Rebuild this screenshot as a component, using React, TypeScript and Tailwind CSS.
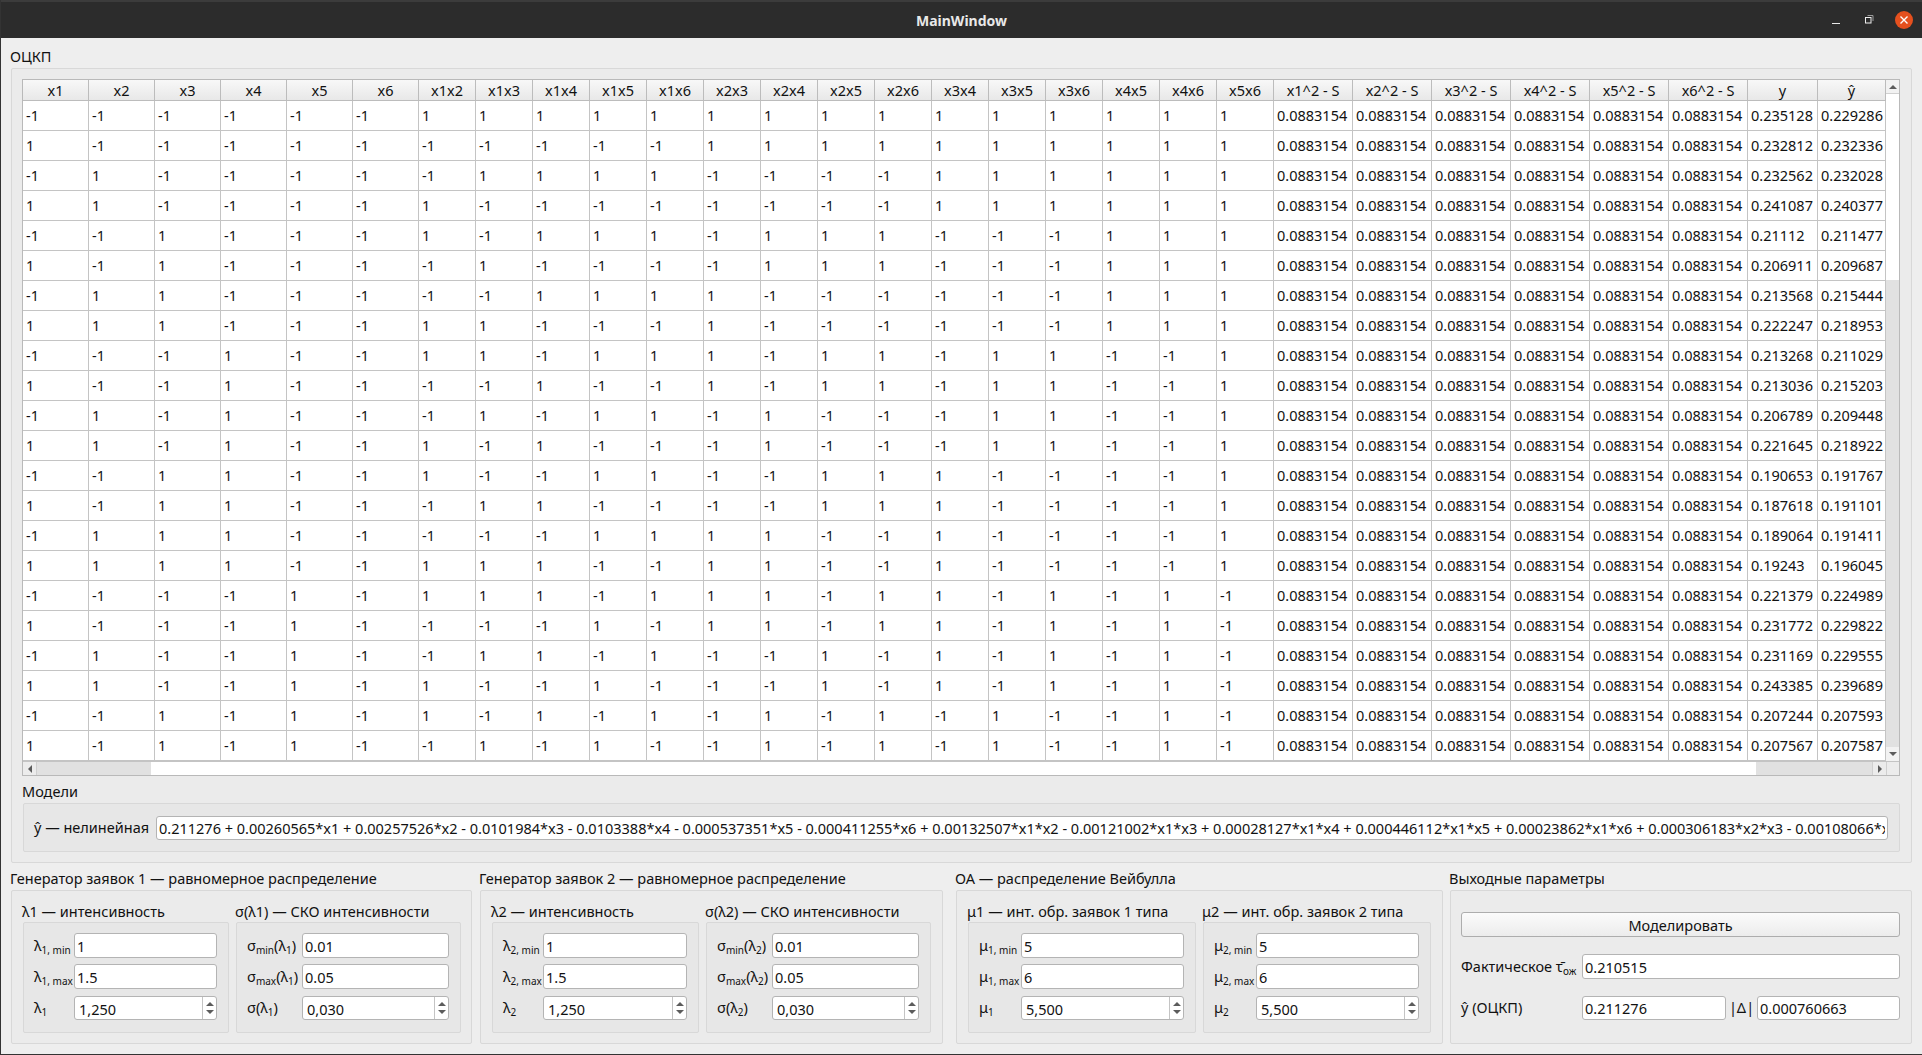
import type { ReactNode } from 'react';

const COLUMNS = [
  'x1', 'x2', 'x3', 'x4', 'x5', 'x6',
  'x1x2', 'x1x3', 'x1x4', 'x1x5', 'x1x6', 'x2x3', 'x2x4', 'x2x5', 'x2x6', 'x3x4', 'x3x5', 'x3x6', 'x4x5', 'x4x6', 'x5x6',
  'x1^2 - S', 'x2^2 - S', 'x3^2 - S', 'x4^2 - S', 'x5^2 - S', 'x6^2 - S', 'y', 'ŷ',
];

const COL_WIDTHS = [
  ...Array(6).fill(66),
  ...Array(15).fill(57),
  ...Array(6).fill(79),
  70,
  68,
];

const Y = [
  '0.235128', '0.232812', '0.232562', '0.241087', '0.21112', '0.206911', '0.213568', '0.222247', '0.213268', '0.213036', '0.206789',
  '0.221645', '0.190653', '0.187618', '0.189064', '0.19243', '0.221379', '0.231772', '0.231169', '0.243385', '0.207244', '0.207567',
];

const Y_HAT = [
  '0.229286', '0.232336', '0.232028', '0.240377', '0.211477', '0.209687', '0.215444', '0.218953', '0.211029', '0.215203', '0.209448',
  '0.218922', '0.191767', '0.191101', '0.191411', '0.196045', '0.224989', '0.229822', '0.229555', '0.239689', '0.207593', '0.207587',
];

const FORMULA =
  '0.211276 + 0.00260565*x1 + 0.00257526*x2 - 0.0101984*x3 - 0.0103388*x4 - 0.000537351*x5 - 0.000411255*x6 + 0.00132507*x1*x2 - 0.00121002*x1*x3 + 0.00028127*x1*x4 + 0.000446112*x1*x5 + 0.00023862*x1*x6 + 0.000306183*x2*x3 - 0.00108066*x2*x4';

// half of the factorial plan: factors come from the row index, interactions are products
function buildRow(i: number): string[] {
  const f = [0, 1, 2, 3, 4, 5].map((b) => ((i >> b) & 1 ? 1 : -1));
  const cells = f.map(String);
  for (let a = 0; a < 6; a++) {
    for (let b = a + 1; b < 6; b++) cells.push(String(f[a] * f[b]));
  }
  for (let k = 0; k < 6; k++) cells.push('0.0883154');
  cells.push(Y[i], Y_HAT[i]);
  return cells;
}

function Arrow({ dir }: { dir: 'up' | 'down' | 'left' | 'right' }) {
  const points = {
    up: '0,4 8,4 4,0',
    down: '0,0 8,0 4,4',
    left: '4,0 4,8 0,4',
    right: '0,0 0,8 4,4',
  }[dir];
  const size = dir === 'up' || dir === 'down' ? 'w-2 h-1' : 'w-1 h-2';
  const box = dir === 'up' || dir === 'down' ? '0 0 8 4' : '0 0 4 8';
  return (
    <svg viewBox={box} className={size}>
      <polygon points={points} fill="#5c5c5c" />
    </svg>
  );
}

function DataTable() {
  return (
    <div className="flex flex-col w-[1878px] h-[697px] border border-[#b9b9b9] bg-white shrink-0">
      <div className="flex h-[681px]">
        <table className="table-fixed border-separate border-spacing-0 w-[1863px] shrink-0 text-[#111]">
          <colgroup>
            {COL_WIDTHS.map((w, i) => (
              <col key={i} style={{ width: w }} />
            ))}
          </colgroup>
          <thead>
            <tr className="h-[21px]">
              {COLUMNS.map((c) => (
                <th
                  key={c}
                  className="p-0 font-normal text-center whitespace-nowrap leading-[20px] bg-gradient-to-b from-[#f8f8f8] to-[#e8e8e8] border-r border-b border-[#bcbcbc]"
                >
                  {c}
                </th>
              ))}
            </tr>
          </thead>
          <tbody>
            {Y.map((_, i) => (
              <tr key={i} className="h-[30px]">
                {buildRow(i).map((v, j) => (
                  <td key={j} className="p-0 pl-[3px] pt-px whitespace-nowrap overflow-hidden border-r border-b border-[#c4c4c4]">
                    {v}
                  </td>
                ))}
              </tr>
            ))}
          </tbody>
        </table>
        <div className="flex flex-col w-[13px]">
          <div className="h-[14px] flex items-center justify-center bg-[#f2f2f2] border-b border-[#d0d0d0]">
            <Arrow dir="up" />
          </div>
          <div className="h-[186px] bg-white" />
          <div className="flex-1 bg-[#e1e1e1]" />
          <div className="h-[14px] flex items-center justify-center bg-[#f2f2f2]">
            <Arrow dir="down" />
          </div>
        </div>
      </div>
      <div className="flex h-[14px] border-t border-[#c4c4c4]">
        <div className="flex w-[1863px]">
          <div className="w-[14px] flex items-center justify-center bg-[#ececec] border-r border-[#d0d0d0]">
            <Arrow dir="left" />
          </div>
          <div className="w-[114px] bg-[#e1e1e1]" />
          <div className="w-[1605px] bg-white" />
          <div className="flex-1 bg-[#e1e1e1]" />
          <div className="w-[14px] flex items-center justify-center bg-[#ececec] border-l border-[#d0d0d0]">
            <Arrow dir="right" />
          </div>
        </div>
        <div className="flex-1 bg-[#ececec] border-l border-[#d0d0d0]" />
      </div>
    </div>
  );
}

function LineEdit({ value, className = '' }: { value: string; className?: string }) {
  return (
    <input
      readOnly
      value={value}
      className={`px-[2px] bg-white border border-[#b4b4b4] rounded-[3px] text-[#111] outline-none shrink-0 ${className}`}
    />
  );
}

function SpinBox({ value, className = '' }: { value: string; className?: string }) {
  return (
    <div className={`flex h-[24px] bg-white border border-[#b4b4b4] rounded-[3px] shrink-0 ${className}`}>
      <div className="flex-1 pl-[4px] leading-[24px] text-[#111]">{value}</div>
      <div className="w-[14px] flex flex-col items-center justify-center gap-[4px] border-l border-[#c4c4c4]">
        <Arrow dir="up" />
        <Arrow dir="down" />
      </div>
    </div>
  );
}

function Sym({ base, sub, tail }: { base: string; sub: string; tail?: ReactNode }) {
  return (
    <span className="whitespace-nowrap text-[#111]">
      {base}
      <sub className="text-[10px] bottom-[-3px]">{sub}</sub>
      {tail}
    </span>
  );
}

interface ParamRow {
  label: ReactNode;
  value: string;
}

function InnerGroup({
  title,
  rows,
  width,
  inputWidth,
}: {
  title: string;
  rows: ParamRow[];
  width: string;
  inputWidth: string;
}) {
  return (
    <div className={`flex flex-col ${width}`}>
      <div className="h-[21px] leading-[21px] whitespace-nowrap -ml-px">{title}</div>
      <div className="flex flex-col h-[111px] pl-[10px] pr-[11px] pt-[10px] border border-[#d8d8d8] rounded-[2px] bg-[#e7e7e7]">
        <div className="flex items-center justify-between">
          {rows[0].label}
          <LineEdit value={rows[0].value} className={`h-[25px] ${inputWidth}`} />
        </div>
        <div className="flex items-center justify-between mt-[6px]">
          {rows[1].label}
          <LineEdit value={rows[1].value} className={`h-[25px] ${inputWidth}`} />
        </div>
        <div className="flex items-center justify-between mt-[7px]">
          {rows[2].label}
          <SpinBox value={rows[2].value} className={inputWidth} />
        </div>
      </div>
    </div>
  );
}

function Group({ title, width, className = '', children }: { title: string; width: string; className?: string; children: ReactNode }) {
  return (
    <div className={`flex flex-col shrink-0 ${width} ${className}`}>
      <div className="h-[22px] leading-[21px] whitespace-nowrap -ml-px">{title}</div>
      <div className="flex h-[154px] pl-[11px] pt-[10px] gap-[7px] border border-[#d8d8d8] rounded-[2px] bg-[#ebebeb]">{children}</div>
    </div>
  );
}

function lambdaRows(n: string) {
  return [
    { label: <Sym base="λ" sub={`${n}, min`} />, value: '1' },
    { label: <Sym base="λ" sub={`${n}, max`} />, value: '1.5' },
    { label: <Sym base="λ" sub={n} />, value: '1,250' },
  ];
}

function sigmaRows(sub: string) {
  const tail = (
    <>
      (λ<sub className="text-[10px] bottom-[-3px]">{sub}</sub>)
    </>
  );
  return [
    { label: <Sym base="σ" sub="min" tail={tail} />, value: '0.01' },
    { label: <Sym base="σ" sub="max" tail={tail} />, value: '0.05' },
    { label: <span className="whitespace-nowrap">σ{tail}</span>, value: '0,030' },
  ];
}

function muRows(n: string) {
  return [
    { label: <Sym base="μ" sub={`${n}, min`} />, value: '5' },
    { label: <Sym base="μ" sub={`${n}, max`} />, value: '6' },
    { label: <Sym base="μ" sub={n} />, value: '5,500' },
  ];
}

function TitleBar() {
  return (
    <div className="flex items-center h-[38px] shrink-0 bg-[#2c2c2c] border-t-2 border-[#3c3c3c]">
      <div className="flex-1" />
      <div className="ml-[9px] font-bold text-[14px] text-[#e8e8e8]">MainWindow</div>
      <div className="flex-1 flex items-center justify-end pr-[9px]">
        <svg viewBox="0 0 10 10" className="w-[10px] h-[10px] mt-[3px]">
          <rect x="1" y="6" width="8" height="1" fill="#e8e8e8" />
        </svg>
        <svg viewBox="0 0 10 10" className="w-[10px] h-[10px] ml-[23px]">
          <path d="M3.5 .5h5.5v5.5" fill="none" stroke="#9a9a9a" />
          <rect x="1.5" y="2.5" width="5.5" height="5.5" fill="none" stroke="#eeeeee" />
        </svg>
        <svg viewBox="0 0 18 18" className="w-[18px] h-[18px] ml-[21px]">
          <circle cx="9" cy="9" r="9" fill="#e5501e" />
          <path d="M5.5 5.5l7 7M12.5 5.5l-7 7" stroke="#ffffff" strokeWidth="1.4" />
        </svg>
      </div>
    </div>
  );
}

export default function App() {
  return (
    <div className="flex flex-col w-screen h-screen overflow-hidden bg-[#eeeeee] text-[14.5px] text-[#111] border-l border-b border-[#333333] font-['Noto_Sans',sans-serif]">
      <TitleBar />
      <div className="flex flex-col pl-[10px] pr-[10px]">
        <div className="h-[30px] pt-[8px] leading-[21px] -ml-px">ОЦКП</div>
        <div className="flex flex-col h-[795px] pl-[10px] pt-[10px] border border-[#d8d8d8] rounded-[2px] bg-[#ebebeb]">
          <DataTable />
          <div className="mt-[5px] h-[22px] leading-[21px]">Модели</div>
          <div className="flex items-center justify-between ml-px w-[1877px] h-[49px] pl-[10px] pr-[11px] border border-[#d8d8d8] rounded-[2px] bg-[#e7e7e7]">
            <span className="whitespace-nowrap">ŷ — нелинейная</span>
            <LineEdit value={FORMULA} className="w-[1732px] h-[24px]" />
          </div>
        </div>
        <div className="flex mt-[5px]">
          <Group title="Генератор заявок 1 — равномерное распределение" width="w-[461px]">
            <InnerGroup title="λ1 — интенсивность" rows={lambdaRows('1')} width="w-[206px]" inputWidth="w-[143px]" />
            <InnerGroup title="σ(λ1) — СКО интенсивности" rows={sigmaRows('1')} width="w-[225px]" inputWidth="w-[147px]" />
          </Group>
          <Group title="Генератор заявок 2 — равномерное распределение" width="w-[463px]" className="ml-[8px]">
            <InnerGroup title="λ2 — интенсивность" rows={lambdaRows('2')} width="w-[207px]" inputWidth="w-[144px]" />
            <InnerGroup title="σ(λ2) — СКО интенсивности" rows={sigmaRows('2')} width="w-[225px]" inputWidth="w-[147px]" />
          </Group>
          <Group title="ОА — распределение Вейбулла" width="w-[487px]" className="ml-[13px]">
            <InnerGroup title="μ1 — инт. обр. заявок 1 типа" rows={muRows('1')} width="w-[228px]" inputWidth="w-[163px]" />
            <InnerGroup title="μ2 — инт. обр. заявок 2 типа" rows={muRows('2')} width="w-[228px]" inputWidth="w-[163px]" />
          </Group>
          <div className="flex flex-col shrink-0 w-[462px] ml-[7px]">
            <div className="h-[22px] leading-[21px] whitespace-nowrap -ml-px">Выходные параметры</div>
            <div className="flex flex-col h-[154px] pl-[10px] pr-[11px] pt-[21px] border border-[#d8d8d8] rounded-[2px] bg-[#ebebeb]">
              <button className="h-[25px] border border-[#adadad] rounded-[3px] bg-gradient-to-b from-[#fbfbfb] to-[#ececec] text-[#111] leading-[22px]">
                Моделировать
              </button>
              <div className="flex items-center justify-between mt-[17px]">
                <Sym base="Фактическое τ̄" sub="ож" />
                <LineEdit value="0.210515" className="w-[318px] h-[25px]" />
              </div>
              <div className="flex items-center justify-between mt-[17px]">
                <span className="whitespace-nowrap">ŷ (ОЦКП)</span>
                <div className="flex items-center justify-between w-[318px]">
                  <LineEdit value="0.211276" className="w-[144px] h-[24px]" />
                  <span className="whitespace-nowrap">|Δ|</span>
                  <LineEdit value="0.000760663" className="w-[143px] h-[24px]" />
                </div>
              </div>
            </div>
          </div>
        </div>
      </div>
    </div>
  );
}
